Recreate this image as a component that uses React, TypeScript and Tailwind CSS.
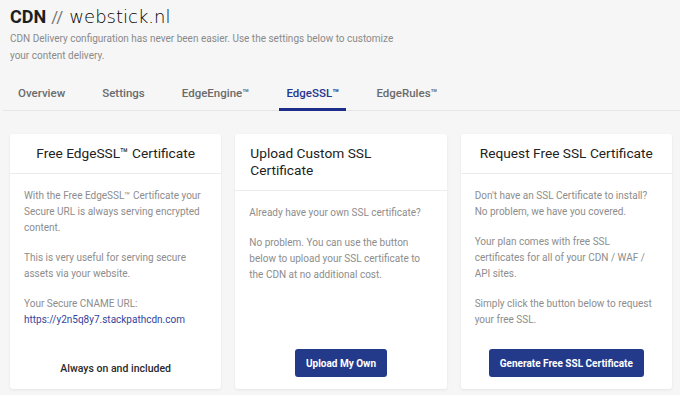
const tabs = ['Overview', 'Settings', 'EdgeEngine™', 'EdgeSSL™', 'EdgeRules™']

function Card({
  title,
  left,
  children,
  footer,
}: {
  title: string
  left?: boolean
  children: React.ReactNode
  footer: React.ReactNode
}) {
  return (
    <div className="bg-white rounded-[3px] shadow-[0_1px_3px_rgba(0,0,0,0.07)] flex flex-col">
      <div
        className={`px-[15px] py-[11px] border-b border-[#ececec] text-[13.7px] leading-[17px] text-[#222] ${
          left ? 'text-left' : 'text-center'
        }`}
      >
        {title}
      </div>
      <div className="px-[14px] pt-[14px] text-[10px] leading-[16px] text-[#8d8d8d] space-y-[14px]">
        {children}
      </div>
      <div className="mt-auto pb-[12px] flex justify-center">{footer}</div>
    </div>
  )
}

function Btn({ label }: { label: string }) {
  return (
    <button className="h-[28px] px-[11px] rounded-[3px] bg-[#233a8b] text-white text-[10px] font-bold">
      {label}
    </button>
  )
}

export default function App() {
  return (
    <div className="w-[680px] h-[395px] overflow-hidden bg-[#f6f6f6] font-['Roboto',sans-serif]">
      <div className="px-[10px]">
        <h1 className="h-[28px] flex items-end">
          <span className="text-[18px] font-bold text-[#1e1e1e] leading-[22px]">CDN</span>
          <span className="ml-[5px] text-[17px] text-[#777] leading-[22px]">//</span>
          <span className="ml-[6px] text-[18px] font-['DejaVu_Sans',sans-serif] font-extralight text-black leading-[22px]">
            webstick.nl
          </span>
        </h1>
        <p className="mt-[2px] w-[400px] text-[10px] leading-[17px] text-[#8a8a8a]">
          CDN Delivery configuration has never been easier. Use the settings below to customize your
          content delivery.
        </p>
      </div>

      <div className="ml-[3px] mt-[7px] flex gap-[23px] pl-[8px] border-b border-[#e6e6e6]">
        {tabs.map((t) => {
          const active = t === 'EdgeSSL™'
          return (
            <div
              key={t}
              className={`-mb-[1px] px-[7px] pt-[14px] pb-[7px] text-[11.5px] leading-[16px] font-medium border-b-[3px] ${
                active ? 'text-[#27358e] border-[#1f2d8a]' : 'text-[#6b6b6b] border-transparent'
              }`}
            >
              {t}
            </div>
          )
        })}
      </div>

      <div className="mt-[23px] pl-[10px] pr-[8px] grid grid-cols-3 gap-[14px] h-[255px]">
        <Card
          title="Free EdgeSSL™ Certificate"
          footer={
            <div className="h-[28px] flex items-end text-[10.5px] leading-[16px] font-medium text-[#2a2a2a]">
              Always on and included
            </div>
          }
        >
          <p>With the Free EdgeSSL™ Certificate your Secure URL is always serving encrypted content.</p>
          <p>This is very useful for serving secure assets via your website.</p>
          <p>
            Your Secure CNAME URL:
            <br />
            <span className="text-[#34449a]">https://y2n5q8y7.stackpathcdn.com</span>
          </p>
        </Card>
        <Card title="Upload Custom SSL Certificate" left footer={<Btn label="Upload My Own" />}>
          <p>Already have your own SSL certificate?</p>
          <p>No problem. You can use the button below to upload your SSL certificate to the CDN at no additional cost.</p>
        </Card>
        <Card title="Request Free SSL Certificate" footer={<Btn label="Generate Free SSL Certificate" />}>
          <p>Don't have an SSL Certificate to install? No problem, we have you covered.</p>
          <p>Your plan comes with free SSL certificates for all of your CDN / WAF / API sites.</p>
          <p>Simply click the button below to request your free SSL.</p>
        </Card>
      </div>
    </div>
  )
}
